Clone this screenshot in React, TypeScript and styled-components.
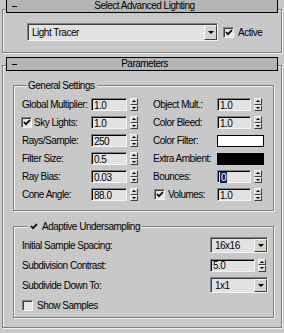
import React from "react";
import styled, { createGlobalStyle } from "styled-components";

const GlobalStyle = createGlobalStyle`
  html, body {
    margin: 0;
    padding: 0;
    background: #c8c8c8;
  }
`;

const Panel = styled.div`
  width: 284px;
  height: 333px;
  overflow: hidden;
  box-sizing: border-box;
  padding-top: 9px;
  background: #c8c8c8;
  font-family: "Liberation Sans", Arial, sans-serif;
  font-size: 10px;
  letter-spacing: -0.5px;
  color: #000;
`;

const Rollout = styled.div<{ $top?: number; $bottom?: number }>`
  display: flex;
  flex-direction: column;
  width: 280px;
  box-sizing: border-box;
  margin: ${(p) => p.$top ?? 0}px 0 0 2px;
  padding-bottom: ${(p) => p.$bottom ?? 0}px;
  border: 1px solid #808080;
  box-shadow: inset 1px 1px 0 #f2f2f2, 1px 1px 0 #f2f2f2;
`;

const RolloutTitle = styled.div<{ $lift: number }>`
  display: grid;
  grid-template-columns: 1fr auto 1fr;
  align-items: center;
  height: 14px;
  box-sizing: border-box;
  margin: -${(p) => p.$lift}px 3px 0 3px;
  padding-left: 5px;
  border: 1px solid #000;
  background: #b5b5b5;
  line-height: 12px;
`;

const Collapse = styled.span`
  width: 5px;
  height: 1px;
  background: #000;
`;

const SelectorRow = styled.div`
  display: flex;
  align-items: center;
  padding: 10px 0 11px 24px;
`;

const Combo = styled.div<{ $w: number; $h: number }>`
  display: flex;
  width: ${(p) => p.$w}px;
  height: ${(p) => p.$h}px;
  box-sizing: border-box;
  border-top: 1px solid #808080;
  border-left: 1px solid #808080;
  border-right: 1px solid #f4f4f4;
  border-bottom: 1px solid #f4f4f4;
  box-shadow: inset 1px 1px 0 #404040;
  background: #e2e2e2;
`;

const ComboText = styled.span`
  flex: 1;
  padding: 1px 0 0 4px;
  display: flex;
  align-items: center;
`;

const ComboButton = styled.span`
  display: flex;
  align-items: center;
  justify-content: center;
  width: 13px;
  box-sizing: border-box;
  margin: 1px 0 0 0;
  background: #d6d3cc;
  border-top: 1px solid #f6f6f6;
  border-left: 1px solid #f6f6f6;
  border-right: 1px solid #404040;
  border-bottom: 1px solid #404040;
`;

const DownArrow = styled.span`
  width: 0;
  height: 0;
  border-left: 3px solid transparent;
  border-right: 3px solid transparent;
  border-top: 3px solid #000;
`;

const CheckBox = styled.span<{ $flat?: boolean }>`
  display: inline-flex;
  align-items: center;
  justify-content: center;
  width: 11px;
  height: 11px;
  flex: none;
  box-sizing: border-box;
  background: ${(p) => (p.$flat ? "transparent" : "#e6e6e6")};
  border-top: 1px solid ${(p) => (p.$flat ? "transparent" : "#808080")};
  border-left: 1px solid ${(p) => (p.$flat ? "transparent" : "#808080")};
  border-right: 1px solid ${(p) => (p.$flat ? "transparent" : "#f4f4f4")};
  border-bottom: 1px solid ${(p) => (p.$flat ? "transparent" : "#f4f4f4")};
  box-shadow: ${(p) => (p.$flat ? "none" : "inset 1px 1px 0 #404040")};
`;

const CheckLabel = styled.span<{ $gap: number; $shift?: number }>`
  display: flex;
  align-items: center;
  gap: ${(p) => p.$gap}px;
  margin-left: ${(p) => p.$shift ?? 0}px;
  white-space: nowrap;
`;

const GroupBox = styled.div<{ $top: number; $bottom: number }>`
  display: flex;
  flex-direction: column;
  width: 261px;
  box-sizing: border-box;
  margin: ${(p) => p.$top}px 0 0 10px;
  padding: 0 0 ${(p) => p.$bottom}px 8px;
  border: 1px solid #808080;
  box-shadow: inset 1px 1px 0 #f2f2f2, 1px 1px 0 #f2f2f2;
`;

const GroupTitle = styled.div<{ $indent: number }>`
  align-self: flex-start;
  display: flex;
  align-items: center;
  height: 12px;
  margin: -7px 0 0 ${(p) => p.$indent}px;
  padding: 0 2px 0 1px;
  background: #c8c8c8;
  white-space: nowrap;
`;

const GeneralGrid = styled.div`
  display: grid;
  grid-template-columns: 69px 47px 15px 64px 46px;
  grid-auto-rows: 13px;
  row-gap: 5px;
  align-items: center;
  margin-top: 7px;
`;

const AdaptiveGrid = styled.div`
  display: grid;
  grid-template-columns: 188px 58px;
  grid-auto-rows: 16px;
  row-gap: 4px;
  align-items: center;
  margin-top: 5px;
`;

const Label = styled.span`
  white-space: nowrap;
`;

const SpinBox = styled.div`
  display: flex;
  align-items: center;
  gap: 3px;
`;

const Field = styled.div<{ $w: number }>`
  display: flex;
  align-items: center;
  width: ${(p) => p.$w}px;
  height: 13px;
  box-sizing: border-box;
  padding: 1px 0 0 2px;
  border-top: 1px solid #808080;
  border-left: 1px solid #808080;
  border-right: 1px solid #f4f4f4;
  border-bottom: 1px solid #f4f4f4;
  box-shadow: inset 1px 1px 0 #000;
  background: #e2e2e2;
`;

const Selected = styled.span`
  background: #0a246a;
  color: #fff;
  padding: 0 1px;
`;

const Spinner = styled.div`
  display: flex;
  flex-direction: column;
  width: 8px;
  height: 13px;
  flex: none;
`;

const SpinHalf = styled.span<{ $down?: boolean }>`
  flex: 1;
  display: flex;
  align-items: center;
  justify-content: center;
  box-sizing: border-box;
  background: #d9d9d9;
  border-top: 1px solid #f6f6f6;
  border-left: 1px solid #f6f6f6;
  border-right: 1px solid #404040;
  border-bottom: 1px solid #404040;

  &::after {
    content: "";
    width: 0;
    height: 0;
    border-left: 2px solid transparent;
    border-right: 2px solid transparent;
    ${(p) => (p.$down ? "border-top: 2px solid #000;" : "border-bottom: 2px solid #000;")}
  }
`;

const Swatch = styled.div<{ $color: string }>`
  width: 47px;
  height: 12px;
  box-sizing: border-box;
  border: 1px solid #000;
  background: ${(p) => p.$color};
`;

const Tick = () => (
  <svg width="8" height="7" viewBox="0 0 8 7">
    <path d="M1 3 L3 5.2 L7 1" fill="none" stroke="#000" strokeWidth="1.7" />
  </svg>
);

const Spin = ({ value, w }: { value: React.ReactNode; w: number }) => (
  <SpinBox>
    <Field $w={w}>{value}</Field>
    <Spinner>
      <SpinHalf />
      <SpinHalf $down />
    </Spinner>
  </SpinBox>
);

const Dropdown = ({ value, w, h }: { value: string; w: number; h: number }) => (
  <Combo $w={w} $h={h}>
    <ComboText>{value}</ComboText>
    <ComboButton>
      <DownArrow />
    </ComboButton>
  </Combo>
);

const App = () => {
  return (
    <Panel>
      <GlobalStyle />

      <Rollout>
        <RolloutTitle $lift={11}>
          <Collapse />
          <span>Select Advanced Lighting</span>
        </RolloutTitle>
        <SelectorRow>
          <Dropdown value="Light Tracer" w={191} h={18} />
          <CheckLabel $gap={4} $shift={5}>
            <CheckBox>
              <Tick />
            </CheckBox>
            Active
          </CheckLabel>
        </SelectorRow>
      </Rollout>

      <Rollout $top={12} $bottom={9}>
        <RolloutTitle $lift={9}>
          <Collapse />
          <span>Parameters</span>
        </RolloutTitle>

        <GroupBox $top={14} $bottom={9}>
          <GroupTitle $indent={5}>General Settings</GroupTitle>
          <GeneralGrid>
            <Label>Global Multiplier:</Label>
            <Spin value="1.0" w={36} />
            <span />
            <Label>Object Mult.:</Label>
            <Spin value="1.0" w={34} />

            <CheckLabel $gap={2} $shift={-1}>
              <CheckBox>
                <Tick />
              </CheckBox>
              Sky Lights:
            </CheckLabel>
            <Spin value="1.0" w={36} />
            <span />
            <Label>Color Bleed:</Label>
            <Spin value="1.0" w={34} />

            <Label>Rays/Sample:</Label>
            <Spin value="250" w={36} />
            <span />
            <Label>Color Filter:</Label>
            <Swatch $color="#ffffff" />

            <Label>Filter Size:</Label>
            <Spin value="0.5" w={36} />
            <span />
            <Label>Extra Ambient:</Label>
            <Swatch $color="#000000" />

            <Label>Ray Bias:</Label>
            <Spin value="0.03" w={36} />
            <span />
            <Label>Bounces:</Label>
            <Spin value={<Selected>0</Selected>} w={34} />

            <Label>Cone Angle:</Label>
            <Spin value="88.0" w={36} />
            <span />
            <CheckLabel $gap={3} $shift={1}>
              <CheckBox>
                <Tick />
              </CheckBox>
              Volumes:
            </CheckLabel>
            <Spin value="1.0" w={34} />
          </GeneralGrid>
        </GroupBox>

        <GroupBox $top={15} $bottom={4}>
          <GroupTitle $indent={5}>
            <CheckLabel $gap={3}>
              <CheckBox $flat>
                <Tick />
              </CheckBox>
              Adaptive Undersampling
            </CheckLabel>
          </GroupTitle>
          <AdaptiveGrid>
            <Label>Initial Sample Spacing:</Label>
            <Dropdown value="16x16" w={58} h={16} />

            <Label>Subdivision Contrast:</Label>
            <Spin value="5.0" w={45} />

            <Label>Subdivide Down To:</Label>
            <Dropdown value="1x1" w={58} h={16} />

            <CheckLabel $gap={4}>
              <CheckBox />
              Show Samples
            </CheckLabel>
          </AdaptiveGrid>
        </GroupBox>
      </Rollout>
    </Panel>
  );
};

export default App;
